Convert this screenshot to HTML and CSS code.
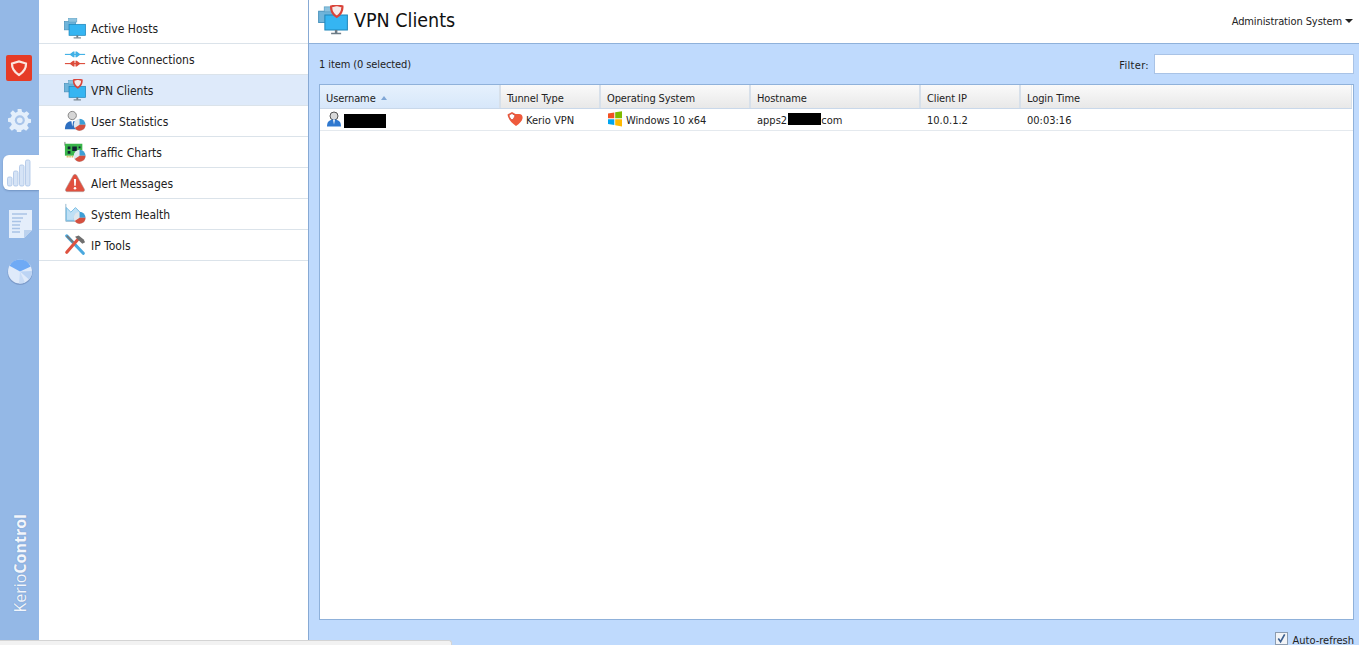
FILE: index.html
```html
<!DOCTYPE html>
<html lang="en">
<head>
<meta charset="utf-8">
<title>VPN Clients</title>
<link rel="stylesheet" href="styles.css">
</head>
<body>
<svg class="defs" width="0" height="0" aria-hidden="true">
  <defs>
    <symbol id="monitors" viewBox="0 0 24 24">
      <rect x="0.500" y="5" width="12" height="9" fill="#6fb4da" stroke="#4a93bd" stroke-width=".8"/>
      <rect x="5" y="1.500" width="9" height="4" fill="#8cc3e0" stroke="#5a9fc4" stroke-width=".6"/>
      <rect x="5.500" y="8" width="18" height="12" fill="#35b5f2" stroke="#1f86ba" stroke-width=".8"/>
      <rect x="13.500" y="20" width="2" height="2.500" fill="#6d7c86"/>
      <rect x="10.500" y="22.200" width="8" height="1.200" fill="#6d7c86"/>
    </symbol>
    <symbol id="shieldline" viewBox="0 0 12 12">
      <path d="M1.500 2.200 6 1l4.500 1.200c.2 3.500-1.500 6.500-4.500 8.300C3 8.700 1.300 5.700 1.500 2.200Z" fill="#f4e9e9" stroke="#d9443a" stroke-width="1.800"/>
    </symbol>
    <symbol id="piebadge" viewBox="0 0 12 12">
      <circle cx="6" cy="6.500" r="5.500" fill="#9a9a9a" opacity=".5"/>
      <circle cx="6" cy="6" r="5.500" fill="#dfe8ee"/>
      <path d="M6 6V.5a5.500 5.500 0 0 1 5.500 5.500Z" fill="#3d9fd6"/>
      <path d="M6 6h5.500A5.500 5.500 0 0 1 1.500 9.200Z" fill="#d5503f"/>
    </symbol>
  </defs>
</svg>

<div class="app">
  <aside class="rail">
    <div class="rail-item rail-logo">
      <svg width="26" height="26" viewBox="0 0 26 26"><rect width="26" height="26" rx="2" fill="#e63b26"/><path d="M6 8.500 13 6.500l7 2c.2 4.500-2.200 8.500-7 11.500C8.200 17 5.800 13 6 8.500Z" fill="none" stroke="#fbe6df" stroke-width="2.200"/></svg>
    </div>
    <div class="rail-item rail-gear">
      <svg width="24" height="24" viewBox="0 0 24 24"><path d="M10 1h4l.6 3 2.300 1 2.600-1.700 2.800 2.800L20 8.700l1 2.300 3 .6v3.800l-3 .6-1 2.300 1.700 2.600-2.800 2.800-2.500-1.600-2.300 1-.6 2.900h-4l-.6-3-2.300-1-2.600 1.700-2.800-2.800L4 17.300l-1-2.300-3-.6v-3.800l3-.6 1-2.300-1.700-2.600 2.800-2.800L7.700 4.900 10 4Z" transform="scale(.96)" fill="#e4effb"/><circle cx="11.800" cy="12.300" r="5" fill="#a9c5ea"/><circle cx="11.800" cy="12.300" r="2.800" fill="#e4effb"/></svg>
    </div>
    <div class="rail-item rail-active">
      <svg width="24" height="28" viewBox="0 0 24 28"><g fill="#d5e3f6" stroke="#a9c3e6" stroke-width=".8"><rect x=".5" y="18" width="4.500" height="9" rx="1.500"/><rect x="6.500" y="12" width="4.500" height="15" rx="1.500"/><rect x="12.500" y="6" width="4.500" height="21" rx="1.500"/><rect x="18.500" y="1" width="4.500" height="26" rx="1.500"/></g></svg>
    </div>
    <div class="rail-item rail-notes">
      <svg width="23" height="28" viewBox="0 0 23 28"><path d="M0 0h23v20l-8 8H0Z" fill="#e4eefb"/><path d="M23 20h-8v8Z" fill="#bcd2ee"/><path d="M3 4h15M3 8h11M3 11.500h9M3 15h8M3 18.500h8M3 22h8" stroke="#a9c3e6" stroke-width="1.400"/></svg>
    </div>
    <div class="rail-item rail-pie">
      <svg width="26" height="26" viewBox="0 0 26 26"><circle cx="13" cy="13.500" r="12.500" fill="#7d9ccb"/><circle cx="13" cy="12.500" r="12" fill="#dfeafa"/><path d="M13 12.500 2.500 6.700A12 12 0 0 1 23.800 7.500Z" fill="#6faaf5"/><path d="M13 12.500 25 12a12 12 0 0 1-3 8.500Z" fill="#bcd4f4"/><path d="M13 12.500l5 11a12 12 0 0 1-6 1Z" fill="#c9dcf6"/></svg>
    </div>
    <div class="rail-brand">Kerio<b>Control</b></div>
  </aside>

  <nav class="nav">
    <a class="nav-row">
      <svg class="nav-icon" viewBox="0 0 24 24"><use href="#monitors"/></svg><span>Active Hosts</span>
    </a>
    <a class="nav-row">
      <svg class="nav-icon" viewBox="0 0 24 24"><path d="M1 7h22" stroke="#3fb0e6" stroke-width="1.200"/><path d="M6 7 10 3.800h1.500V10.200H10ZM18 7 14 3.800h-1.500V10.200H14Z" fill="#3fb0e6"/><path d="M1 17h22" stroke="#dc4b3a" stroke-width="1.200"/><path d="M6 17 10 13.800h1.500V20.200H10ZM18 17 14 13.800h-1.500V20.200H14Z" fill="#dc4b3a"/></svg><span>Active Connections</span>
    </a>
    <a class="nav-row is-selected">
      <svg class="nav-icon" viewBox="0 0 24 24"><use href="#monitors"/><use href="#shieldline" x="9" y="-1" width="12" height="12"/></svg><span>VPN Clients</span>
    </a>
    <a class="nav-row">
      <svg class="nav-icon" viewBox="0 0 24 24"><circle cx="9" cy="6" r="4.500" fill="#d6d6d6" stroke="#7f7f7f"/><path d="M1 21c0-6 3-9 8-9s8 3 8 9Z" fill="#2e6fc0"/><path d="M8 12h2l-1 6Z" fill="#fff"/><use href="#piebadge" x="10" y="9" width="14" height="14"/></svg><span>User Statistics</span>
    </a>
    <a class="nav-row">
      <svg class="nav-icon" viewBox="0 0 24 24"><path d="M1 1v4" stroke="#7a7a7a"/><rect x="1" y="3" width="19" height="13" fill="#39b54a"/><path d="M4 6h3v3H4ZM9 6h5v5H9ZM4 11h3v3H4ZM16 6h2v2h-2Z" fill="#123"/><path d="M3 17h12" stroke="#c9a227" stroke-width="2" stroke-dasharray="1 1"/><use href="#piebadge" x="10" y="9" width="14" height="14"/></svg><span>Traffic Charts</span>
    </a>
    <a class="nav-row">
      <svg class="nav-icon" viewBox="0 0 24 24"><path d="M12 2.500c1 0 1.600.6 2.200 1.600l8 14.500c.8 1.500.1 2.900-1.700 2.900h-17c-1.800 0-2.500-1.400-1.700-2.900l8-14.500c.6-1 1.200-1.600 2.200-1.600Z" fill="#e0503f" stroke="#a9a9a9" stroke-width=".6"/><path d="M10.800 7.500h2.400l-.4 7.500h-1.600Z" fill="#fff"/><circle cx="12" cy="17.800" r="1.400" fill="#fff"/></svg><span>Alert Messages</span>
    </a>
    <a class="nav-row">
      <svg class="nav-icon" viewBox="0 0 24 24"><path d="M2 1v19h12" fill="none" stroke="#8fb3cc"/><path d="M2.500 5l5 5 5-5 6 6v8h-16Z" fill="#bfe0f5" stroke="#56acdc" stroke-width=".8"/><use href="#piebadge" x="10" y="9" width="14" height="14"/></svg><span>System Health</span>
    </a>
    <a class="nav-row">
      <svg class="nav-icon" viewBox="0 0 24 24"><path d="M3 2 21 21" stroke="#4aa8de" stroke-width="3.400" stroke-linecap="round"/><path d="M3 2 10 9" stroke="#777" stroke-width="2"/><path d="M16 5 3 20" stroke="#de5240" stroke-width="3.400" stroke-linecap="round"/><path d="M12 3l4-1.500 5.500 4.500 1.500 3-3 1.500-5-4.500Z" fill="#6f6f6f"/></svg><span>IP Tools</span>
    </a>
  </nav>

  <main class="main">
    <header class="header">
      <div class="title">
        <svg class="title-icon" viewBox="0 0 24 24"><use href="#monitors"/><use href="#shieldline" x="9" y="-1" width="12" height="12"/></svg>
        <h1>VPN Clients</h1>
      </div>
      <div class="user-menu">Administration System<span class="caret"></span></div>
    </header>

    <div class="toolbar">
      <span>1 item (0 selected)</span>
      <label class="filter"><span class="filter-label">Filter:</span><input class="filter-input" type="text"></label>
    </div>

    <section class="grid">
      <div class="grid-head">
        <div class="th is-sorted">Username<span class="sort"></span></div>
        <div class="th">Tunnel Type</div>
        <div class="th">Operating System</div>
        <div class="th">Hostname</div>
        <div class="th">Client IP</div>
        <div class="th">Login Time</div>
      </div>
      <div class="grid-row">
        <div class="td">
          <svg class="cell-icon" viewBox="0 0 16 16"><circle cx="8" cy="5" r="4" fill="#d9d9d9" stroke="#555" stroke-width="1"/><path d="M1 15.500c0-5 2.500-7 7-7s7 2 7 7Z" fill="#2f78cf"/><path d="M7 8.500h2l-1 5Z" fill="#fff"/></svg>
          <span class="redact redact-name"></span>
        </div>
        <div class="td">
          <svg class="cell-icon tunnel-icon" viewBox="0 0 16 16"><path d="M.5 3.500 5 1l3.500 2L12 3c3 0 4 2.500 3.500 4.500-.5 2.500-3 5-6.500 7.500C5 12 1.500 9 .5 3.500Z" fill="#ef5a3c"/><path d="M2 4 5 2.500 8 4.500C7.500 6.500 6.500 8 5 9 3.500 8 2.300 6.500 2 4Z" fill="#fff" stroke="#c9473a" stroke-width=".8"/></svg>Kerio VPN
        </div>
        <div class="td td-os">
          <svg class="cell-icon win-icon" viewBox="0 0 16 16"><path d="M1 2.500 7.300 1.500V7.300H1Z" fill="#f25022"/><path d="M8.200 1.300 15 .3V7.300H8.200Z" fill="#7fba00"/><path d="M1 8.200H7.300V14L1 13Z" fill="#00a4ef"/><path d="M8.200 8.200H15V15.500L8.200 14.300Z" fill="#ffb900"/></svg>Windows 10 x64
        </div>
        <div class="td">apps2.<span class="redact redact-host"></span>com</div>
        <div class="td">10.0.1.2</div>
        <div class="td">00:03:16</div>
      </div>
    </section>

    <footer class="footer">
      <label class="auto"><span class="check"><svg viewBox="0 0 12 12"><path d="M2.500 6 5 9.500 9.500 1.500" fill="none" stroke="#3c5f8f" stroke-width="1.800"/></svg></span><span class="auto-label">Auto-refresh</span></label>
    </footer>
  </main>
</div>
<div class="taskstrip"></div>
</body>
</html>
```

FILE: styles.css
```css
* { box-sizing: border-box; }
html, body { height: 100%; margin: 0; overflow: hidden; }
body {
  font-family: "DejaVu Sans Condensed", "DejaVu Sans", sans-serif;
  font-size: 11px;
  color: #222;
  background: #fff;
}
.defs { position: absolute; }
.app { display: flex; height: 645px; }

/* left rail */
.rail {
  width: 39px;
  flex: none;
  background: #94b8e6;
  display: flex;
  flex-direction: column;
  padding-top: 55px;
}
.rail-item { display: flex; align-items: center; }
.rail-logo { height: 26px; padding-left: 6px; }
.rail-gear { height: 24px; margin-top: 27px; padding-left: 8px; }
.rail-active {
  height: 35px;
  margin: 23px 0 0 3px;
  padding-left: 4px;
  background: #fff;
  border-radius: 6px 0 0 6px;
  box-shadow: 0 1px 2px rgba(60, 90, 140, .4);
}
.rail-notes { height: 28px; margin-top: 20px; padding-left: 9px; }
.rail-pie { height: 26px; margin-top: 21px; padding-left: 7px; }
.rail-brand {
  margin-top: auto;
  margin-bottom: 32px;
  margin-left: 11px;
  writing-mode: vertical-rl;
  transform: rotate(180deg);
  font-family: "Open Sans", sans-serif;
  font-size: 16px;
  line-height: 18px;
  color: #f2f6fc;
  text-shadow: 0 0 1px rgba(60, 90, 140, .5);
}
.rail-brand b { font-weight: 700; }

/* second column */
.nav {
  width: 270px;
  flex: none;
  padding-top: 13px;
  border-right: 1px solid #87a9d4;
  background: #fff;
  font-size: 12px;
}
.nav-row {
  display: flex;
  align-items: center;
  height: 31px;
  padding-left: 25px;
  gap: 5px;
  border-bottom: 1px solid #dbe3ea;
}
.nav-row span { position: relative; top: 1px; }
.nav-row.is-selected { background: #deeafa; }
.nav-icon { width: 22px; height: 22px; flex: none; }

/* main */
.main {
  flex: 1;
  min-width: 0;
  display: flex;
  flex-direction: column;
  background: #bfdafd;
}
.header {
  height: 44px;
  flex: none;
  display: flex;
  align-items: center;
  justify-content: space-between;
  padding: 0 6px 3px 9px;
  background: #fff;
  border-bottom: 1px solid #8fb1da;
}
.title { display: flex; align-items: center; gap: 6px; }
.title-icon { width: 30px; height: 30px; }
h1 { margin: 2px 0 0; font-size: 19.500px; font-weight: 400; color: #111; line-height: 30px; }
.user-menu { display: flex; align-items: center; gap: 3px; margin-top: 2px; letter-spacing: -.1px; }
.caret {
  width: 0;
  height: 0;
  border: 4px solid transparent;
  border-top-color: #222;
  border-bottom: 0;
}
.toolbar {
  height: 40px;
  flex: none;
  display: flex;
  align-items: center;
  justify-content: space-between;
  padding: 0 5px 0 10px;
  letter-spacing: -.1px;
}
.filter { display: flex; align-items: center; gap: 5px; }
.filter-label { letter-spacing: .3px; margin-top: 2px; }
.filter-input {
  width: 200px;
  height: 20px;
  border: 1px solid #a9c3e6;
  background: #fff;
  padding: 0;
}

.grid {
  flex: 1;
  min-height: 0;
  margin: 0 5px 0 10px;
  background: #fff;
  border: 1px solid #8fb1da;
}
.grid-head, .grid-row {
  display: grid;
  grid-template-columns: 181px 100px 150px 170px 100px 1fr;
}
.grid-head {
  height: 24px;
  border-bottom: 1px solid #c9d8ea;
  background: linear-gradient(#fafafa, #e8e8e8);
  margin-right: 1px;
}
.th {
  display: flex;
  align-items: center;
  padding: 3px 0 0 6px;
  border-right: 2px solid #d7e0ea;
  letter-spacing: -.1px;
}
.th:last-child { border-right: 1px solid #d7e0ea; }
.th.is-sorted { background: linear-gradient(#e6f1fd, #d7e7fa); }
.sort {
  margin-left: 5px;
  width: 0;
  height: 0;
  border: 3.500px solid transparent;
  border-bottom: 4px solid #7fa6d6;
  border-top: 0;
}
.grid-row {
  height: 22px;
  border-bottom: 1px solid #e4e9ee;
}
.td {
  display: flex;
  align-items: center;
  padding: 1px 0 0 6px;
  white-space: nowrap;
}
.td-os { letter-spacing: -.1px; }
.cell-icon { width: 16px; height: 16px; flex: none; margin-right: 2px; margin-top: -3px; }
.tunnel-icon { margin-right: 3px; }
.win-icon { margin-right: 3px; }
.redact { display: inline-block; background: #000; }
.redact-name { width: 42px; height: 14px; margin-top: 2px; }
.redact-host { width: 33px; height: 12px; margin: -2px 0 0 -2px; }

.footer {
  height: 25px;
  flex: none;
  display: flex;
  justify-content: flex-end;
  align-items: flex-end;
  padding-right: 5px;
}
.auto { display: flex; align-items: flex-end; gap: 5px; height: 15px; }
.auto-label { line-height: 15px; margin-bottom: -3px; }
.check {
  width: 13px;
  height: 13px;
  background: #f2f4f7;
  border: 1px solid #8c9cb0;
  display: block;
}
.check svg { display: block; width: 11px; height: 11px; }

.taskstrip {
  position: absolute;
  left: 0;
  bottom: 0;
  width: 452px;
  height: 5px;
  background: #f2f2f2;
  border: 1px solid #d4d4d4;
  border-width: 1px 1px 0 0;
  border-radius: 0 3px 0 0;
}
```
